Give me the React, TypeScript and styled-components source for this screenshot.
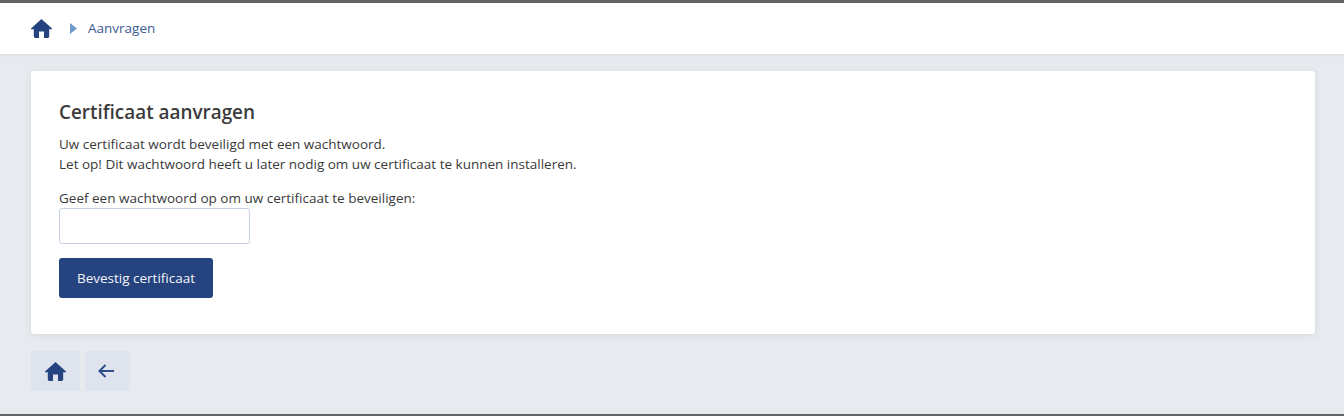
import styled, { createGlobalStyle } from "styled-components";

const GlobalStyle = createGlobalStyle`
  html, body {
    margin: 0;
    padding: 0;
  }
  body {
    font-family: "Open Sans", "Liberation Sans", sans-serif;
    background: #e7ebef;
  }
`;

const Page = styled.div`
  height: 416px;
  box-sizing: border-box;
  display: flex;
  flex-direction: column;
  border-top: 3px solid #636363;
  border-bottom: 2px solid #636363;
  background: #e7ebef;
  overflow: hidden;
`;

const Breadcrumb = styled.nav`
  height: 51px;
  flex: none;
  box-sizing: border-box;
  display: flex;
  align-items: center;
  padding: 0 0 1px 31px;
  background: #fff;
  box-shadow: 0 1px 3px rgba(40, 60, 90, 0.08);
`;

const HomeIcon = styled.svg`
  width: 21px;
  height: 19px;
  fill: #24437f;
  display: block;
`;

const Caret = styled.svg`
  width: 7px;
  height: 11px;
  margin: 0 11px 0 18px;
  fill: #6f9bcb;
  display: block;
`;

const Crumb = styled.a`
  font-size: 13.5px;
  color: #3c5a92;
`;

const Content = styled.main`
  padding: 17px 29px 0 31px;
`;

const Card = styled.section`
  height: 263px;
  box-sizing: border-box;
  padding: 29px 28px 0;
  background: #fff;
  border-radius: 3px;
  box-shadow: 0 1px 6px rgba(40, 60, 90, 0.1);
  color: #3a3a3a;
`;

const Title = styled.h1`
  margin: 0 0 10px;
  font-size: 18.9px;
  line-height: 24px;
  font-weight: 600;
  color: #3b3b3b;
`;

const Text = styled.p`
  margin: 0 0 15px;
  font-size: 13.5px;
  line-height: 20px;
`;

const Label = styled.label`
  display: block;
  font-size: 13.5px;
  line-height: 18px;
`;

const Input = styled.input`
  display: block;
  width: 191px;
  height: 36px;
  box-sizing: border-box;
  margin: 1px 0 14px;
  border: 1px solid #c5d0e0;
  border-radius: 3px;
  background: #fff;
  outline: none;
`;

const PrimaryButton = styled.button`
  display: block;
  width: 154px;
  height: 40px;
  padding: 0;
  border: none;
  border-radius: 3px;
  background: #24437f;
  color: #f2f5fa;
  font-family: inherit;
  font-size: 13.5px;
`;

const Actions = styled.div`
  display: flex;
  gap: 5px;
  margin-top: 17px;
`;

const ActionButton = styled.button<{ $width: number }>`
  width: ${(p) => p.$width}px;
  height: 40px;
  padding: 0;
  display: flex;
  align-items: center;
  justify-content: center;
  border: none;
  border-radius: 3px;
  background: #dee3ee;
`;

const BackIcon = styled.svg`
  width: 16px;
  height: 14px;
  margin-right: 3px;
  fill: none;
  stroke: #2f4f8a;
  stroke-width: 2;
  display: block;
`;

const housePath =
  "M10.5 0 L21 9.6 L21 10.2 L18.2 10.2 L18.2 17.6 Q18.2 19 16.8 19 L13 19 L13 12.6 L8 12.6 L8 19 L4.2 19 Q2.8 19 2.8 17.6 L2.8 10.2 L0 10.2 L0 9.6 Z";

export default function App() {
  return (
    <Page>
      <GlobalStyle />
      <Breadcrumb>
        <HomeIcon viewBox="0 0 21 19">
          <path d={housePath} />
        </HomeIcon>
        <Caret viewBox="0 0 7 11">
          <path d="M0 0 L7 5.5 L0 11 Z" />
        </Caret>
        <Crumb>Aanvragen</Crumb>
      </Breadcrumb>
      <Content>
        <Card>
          <Title>Certificaat aanvragen</Title>
          <Text>
            Uw certificaat wordt beveiligd met een wachtwoord.
            <br />
            Let op! Dit wachtwoord heeft u later nodig om uw certificaat te kunnen installeren.
          </Text>
          <Label htmlFor="pw">Geef een wachtwoord op om uw certificaat te beveiligen:</Label>
          <Input id="pw" type="password" />
          <PrimaryButton>Bevestig certificaat</PrimaryButton>
        </Card>
        <Actions>
          <ActionButton $width={49}>
            <HomeIcon viewBox="0 0 21 19">
              <path d={housePath} />
            </HomeIcon>
          </ActionButton>
          <ActionButton $width={45}>
            <BackIcon viewBox="0 0 16 14">
              <path d="M16 7 H1.5 M7.5 1 L1.5 7 L7.5 13" />
            </BackIcon>
          </ActionButton>
        </Actions>
      </Content>
    </Page>
  );
}
